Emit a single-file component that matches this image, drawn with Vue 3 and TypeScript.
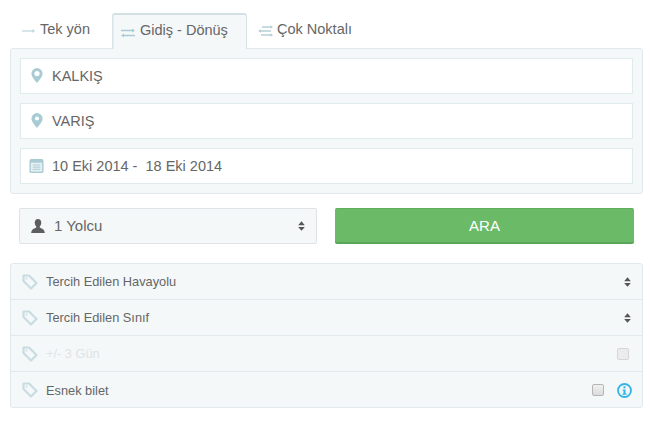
<script setup lang="ts">
const options = [
  { label: 'Tercih Edilen Havayolu', kind: 'select', disabled: false },
  { label: 'Tercih Edilen Sınıf', kind: 'select', disabled: false },
  { label: '+/- 3 Gün', kind: 'check', disabled: true },
  { label: 'Esnek bilet', kind: 'info', disabled: false },
]
</script>

<template>
  <div class="page">
    <div class="tabs">
      <div class="tab first">
        <svg class="tab-ico low" width="13" height="8" viewBox="0 0 13 8"><path d="M0 4h11" stroke="#bcd5da" stroke-width="1.200" fill="none"/><path d="M10.500 2l2.500 2-2.500 2z" fill="#bcd5da"/></svg>
        <span>Tek yön</span>
      </div>
      <div class="tab active">
        <svg class="tab-ico low" width="14" height="10" viewBox="0 0 14 10"><path d="M0 2.500h12M14 7.500H2" stroke="#a9cbd3" stroke-width="1.300" fill="none"/><path d="M11 .4l3 2.100-3 2.100zM3 5.400L0 7.500l3 2.100z" fill="#a9cbd3"/></svg>
        <span>Gidiş - Dönüş</span>
      </div>
      <div class="tab multi">
        <svg class="tab-ico low" width="15" height="12" viewBox="0 0 15 12"><path d="M4 2h9M2 6h11M3 10h10" stroke="#b5cfd6" stroke-width="1.500" fill="none"/><path d="M12.500 .2L15 2l-2.500 1.800zM3 4.200L0 6l3 1.800zM12.500 8.200L15 10l-2.500 1.800z" fill="#b5cfd6"/></svg>
        <span>Çok Noktalı</span>
      </div>
    </div>

    <div class="panel">
      <div class="field">
        <svg class="pin" width="12" height="15" viewBox="0 0 13 17"><path fill-rule="evenodd" d="M6.500 0a6.300 6.300 0 0 1 6.300 6.300c0 3.800-4 8-6.300 10.700C4.200 14.300.2 10.100.2 6.300A6.300 6.300 0 0 1 6.500 0zm0 3.300a3 3 0 1 0 0 6 3 3 0 0 0 0-6z" fill="#a9cbd3"/></svg>
        <span>KALKIŞ</span>
      </div>
      <div class="field">
        <svg class="pin" width="12" height="15" viewBox="0 0 13 17"><path fill-rule="evenodd" d="M6.500 0a6.300 6.300 0 0 1 6.300 6.300c0 3.800-4 8-6.300 10.700C4.200 14.300.2 10.100.2 6.300A6.300 6.300 0 0 1 6.500 0zm0 4a2.300 2.300 0 1 0 0 4.600 2.300 2.300 0 0 0 0-4.600z" fill="#a9cbd3"/></svg>
        <span>VARIŞ</span>
      </div>
      <div class="field date">
        <svg class="cal" width="15" height="15" viewBox="0 0 15 16"><rect x="0" y="1" width="15" height="15" rx="2" fill="#a9cbd3"/><rect x="1.500" y="5" width="12" height="9.500" fill="#e6f0f3"/><path d="M3.500 7.500h8M3.500 9.800h8M3.500 12.100h8" stroke="#a9cbd3" stroke-width="1"/></svg>
        <span>10 Eki 2014 -&nbsp; 18 Eki 2014</span>
      </div>
    </div>

    <div class="actions">
      <div class="passenger">
        <svg class="user" width="14" height="14" viewBox="0 0 15 15"><path d="M7.500 0C5.300 0 4 1.700 4 3.900c0 1.600.7 3 1.500 3.900.3.600.2 1.400-.3 1.700C3.500 10.400.5 11 .2 15h14.600c-.3-4-3.300-4.600-5-5.500-.5-.3-.6-1.100-.3-1.700.8-.9 1.500-2.300 1.500-3.900C11 1.700 9.700 0 7.500 0z" fill="#5e5e5e"/></svg>
        <span class="passenger-label">1 Yolcu</span>
        <svg class="updown" width="7" height="10" viewBox="0 0 8 11"><path d="M4 0l3.800 4.500H.2zM4 11L.2 6.500h7.600z" fill="#555"/></svg>
      </div>
      <button class="search" type="button">ARA</button>
    </div>

    <div class="list">
      <div v-for="o in options" :key="o.label" class="row" :class="{ off: o.disabled }">
        <svg class="tag" width="16" height="16" viewBox="0 0 16 16"><path d="M1.500 1.500h5.500l7.500 7.500-5.500 5.500-7.500-7.500z" fill="none" stroke="#c9dce2" stroke-width="2.200" stroke-linejoin="round"/><circle cx="4.500" cy="4.500" r="1" fill="#c9dce2"/></svg>
        <span class="row-label">{{ o.label }}</span>
        <svg v-if="o.kind === 'select'" class="updown" width="7" height="10" viewBox="0 0 8 11"><path d="M4 0l3.800 4.500H.2zM4 11L.2 6.500h7.600z" fill="#555"/></svg>
        <span v-if="o.kind === 'check'" class="box faded"></span>
        <template v-if="o.kind === 'info'">
          <span class="box"></span>
          <svg class="info" width="15" height="15" viewBox="0 0 16 16"><circle cx="8" cy="8" r="6.900" fill="none" stroke="#35b5e5" stroke-width="2"/><rect x="6.900" y="3.500" width="2.200" height="2.200" fill="#35b5e5"/><path d="M5.800 6.800h3.300v4.300h1.100v1.300H5.800v-1.300h1.100V8.100H5.800z" fill="#35b5e5"/></svg>
        </template>
      </div>
    </div>
  </div>
</template>

<style scoped>
.page {
  width: 650px;
  height: 425px;
  box-sizing: border-box;
  padding: 13px 7px 0 10px;
  font-family: "Liberation Sans", Arial, sans-serif;
  color: #666;
  background: #fff;
  overflow: hidden;
}
.tabs {
  display: flex;
  height: 35px;
  position: relative;
  z-index: 1;
}
.tab {
  display: flex;
  align-items: center;
  gap: 5px;
  box-sizing: border-box;
  height: 35px;
  padding: 0 0 4px 12px;
  font-size: 14.500px;
}
.tab-ico.low {
  margin-top: 5px;
}
.tab.first {
  width: 102px;
}
.tab.active {
  width: 135px;
  padding-left: 8px;
  background: #f4f8f9;
  border: 1px solid #d7e3e6;
  border-top: 2px solid #d3e0e4;
  border-bottom: none;
  border-radius: 3px 3px 0 0;
  height: 36px;
  box-shadow: inset 1px 0 0 #e6eef0;
}
.tab.multi {
  padding-left: 11px;
  gap: 4px;
}
.panel {
  display: flex;
  flex-direction: column;
  gap: 9px;
  box-sizing: border-box;
  height: 146px;
  padding: 9px 9px;
  background: #f4f8f9;
  border: 1px solid #dfe9ec;
  border-radius: 3px;
}
.field {
  display: flex;
  align-items: center;
  gap: 9px;
  box-sizing: border-box;
  height: 36px;
  padding: 0 10px 1px;
  background: #fff;
  border: 1px solid #dfeaed;
  font-size: 14.500px;
}
.field.date {
  padding-left: 8px;
  gap: 8px;
}
.actions {
  display: flex;
  justify-content: space-between;
  margin: 14px 9px 19px;
}
.passenger {
  display: flex;
  align-items: center;
  box-sizing: border-box;
  width: 298px;
  height: 36px;
  padding: 0 10px 0 11px;
  background: #f4f8f9;
  border: 1px solid #dfe3e5;
  border-radius: 2px;
  font-size: 15px;
}
.passenger-label {
  flex: 1;
  margin-left: 9px;
  margin-top: -1px;
}
.search {
  width: 299px;
  height: 36px;
  border: none;
  border-top: 1px solid #5fae60;
  border-bottom: 2px solid #58a65a;
  border-radius: 2px;
  background: #6aba67;
  color: #fff;
  font: 15px "Liberation Sans", Arial, sans-serif;
}
.list {
  box-sizing: border-box;
  height: 145px;
  background: #f4f8f9;
  border: 1px solid #e0e9ec;
  border-radius: 3px;
}
.row {
  display: flex;
  align-items: center;
  box-sizing: border-box;
  height: 36px;
  padding: 0 10px 0 11px;
  font-size: 12.800px;
  border-bottom: 1px solid #e0e9ec;
}
.row:last-child {
  border-bottom: none;
}
.row-label {
  flex: 1;
  margin-left: 8px;
}
.row.off .row-label {
  color: #dfe3e4;
}
.box {
  box-sizing: border-box;
  width: 12px;
  height: 12px;
  border: 1px solid #b5b5b5;
  border-radius: 2px;
  background: linear-gradient(#f0f0f0, #dcdcdc);
}
.box.faded {
  border-color: #d5d5d5;
  background: #ececec;
  margin-right: 3px;
}
.info {
  margin-left: 13px;
}
.updown {
  flex: none;
  margin-right: 1px;
}
</style>
